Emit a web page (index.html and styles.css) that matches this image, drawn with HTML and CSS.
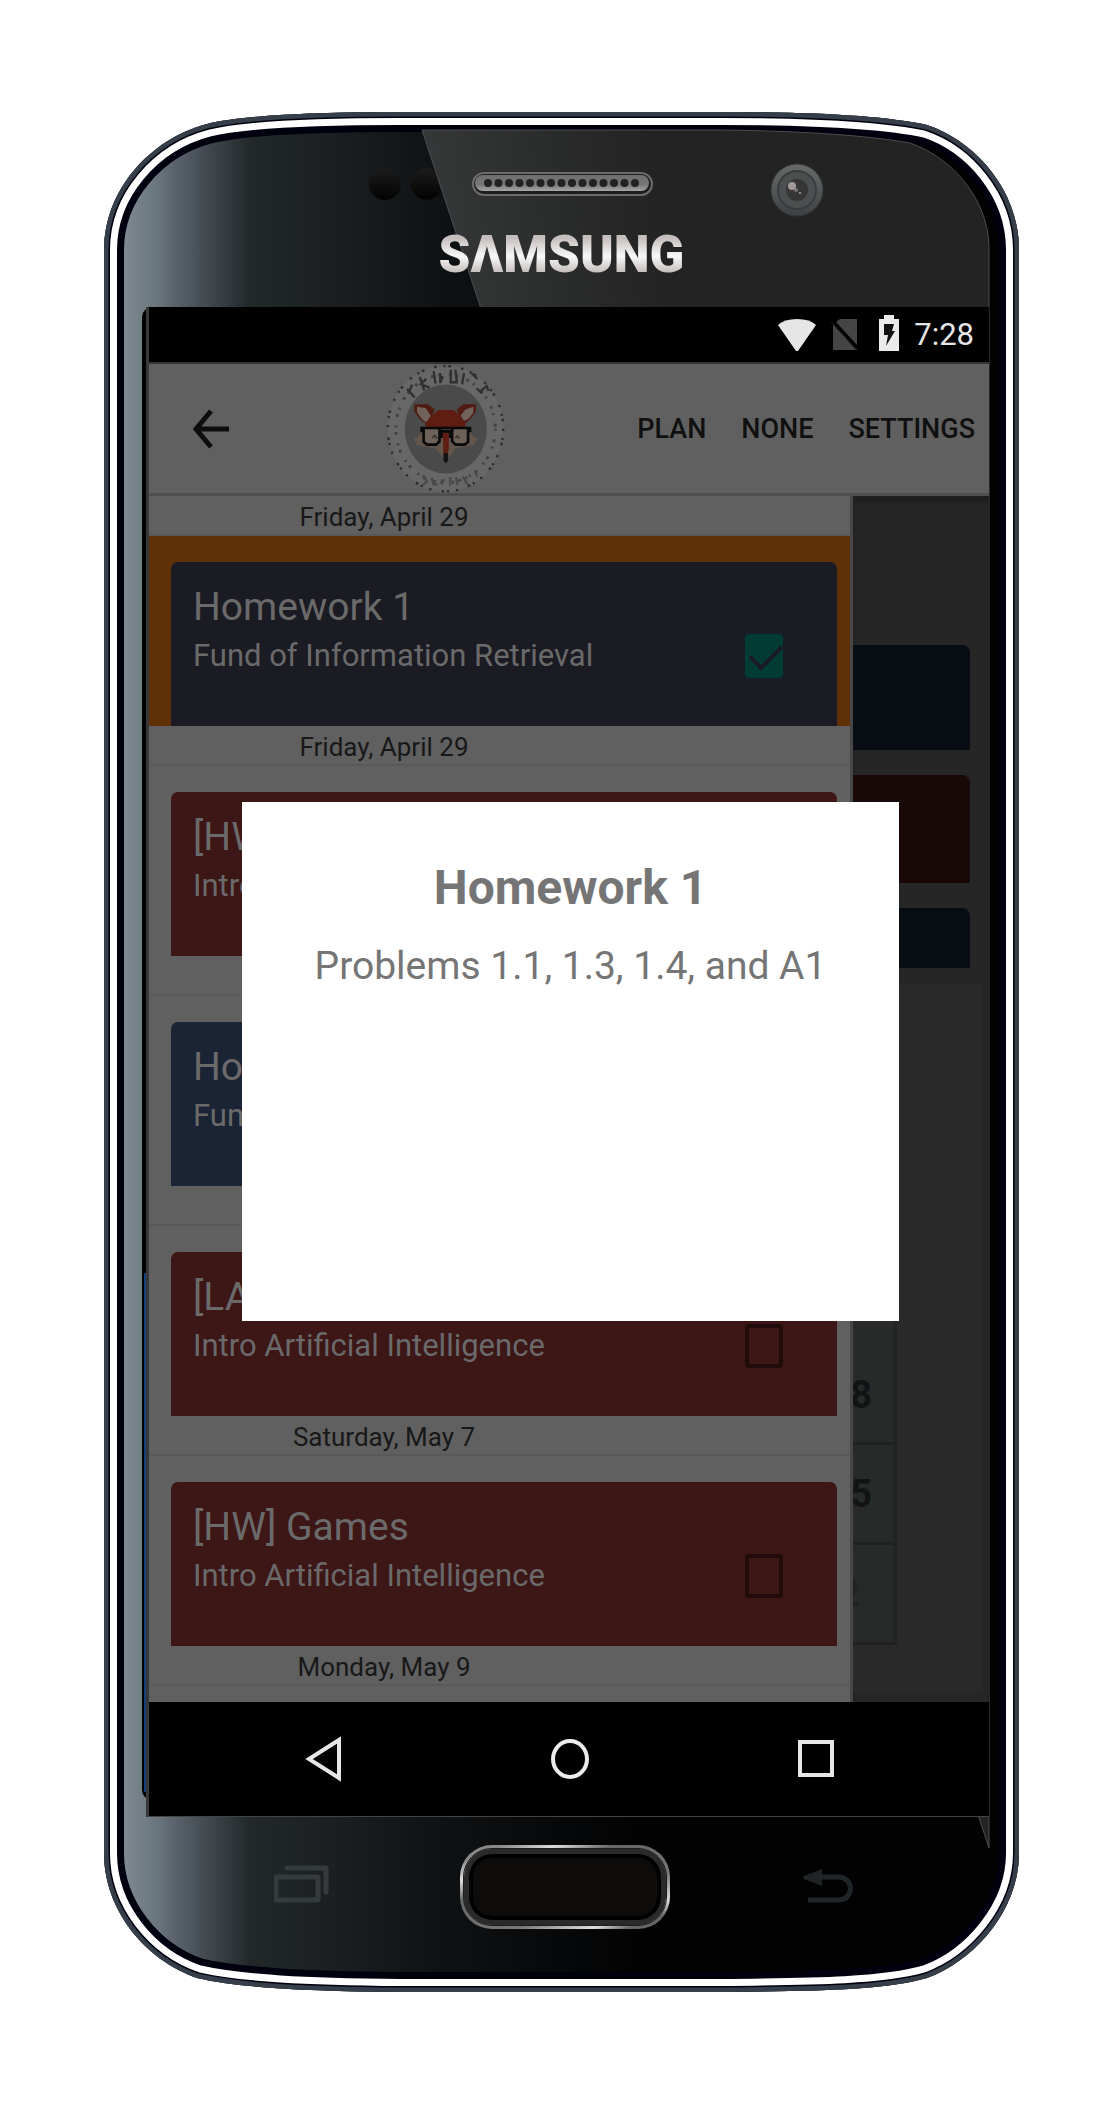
FILE: index.html
```html
<!DOCTYPE html>
<html lang="en">
<head>
<meta charset="utf-8">
<meta name="viewport" content="width=device-width, initial-scale=1">
<title>Homework planner</title>
<link rel="stylesheet" href="styles.css">
</head>
<body>
<div class="phone">
  <svg class="frame" viewBox="104 112 915 1880" preserveAspectRatio="none" aria-hidden="true">
    <defs>
      <linearGradient id="body" gradientUnits="userSpaceOnUse" x1="124" y1="0" x2="650" y2="0">
        <stop offset="0" stop-color="#7e8990"/><stop offset=".06" stop-color="#6b777e"/>
        <stop offset=".1" stop-color="#59616b"/><stop offset=".15" stop-color="#454d53"/>
        <stop offset=".24" stop-color="#22282a"/><stop offset=".38" stop-color="#1c2022"/>
        <stop offset=".57" stop-color="#101416"/><stop offset=".7" stop-color="#0c0d0f"/>
        <stop offset=".88" stop-color="#050607"/><stop offset="1" stop-color="#020202"/>
      </linearGradient>
      <linearGradient id="glare" gradientUnits="userSpaceOnUse" x1="430" y1="200" x2="660" y2="170">
        <stop offset="0" stop-color="#363738"/><stop offset=".6" stop-color="#292a2a"/><stop offset="1" stop-color="#232323"/>
      </linearGradient>
      <path id="shell" d="M104 250C104 190 150 139 207 124C240 116 307 112 400 112H720C820 112 885 116 927 125C975 141 1019 190 1019 250V1853C1019 1910 975 1960 927 1978C885 1990 820 1991 720 1992H400C307 1991 240 1988 197 1978C145 1960 104 1910 104 1853Z"/>
      <clipPath id="shellClip"><use href="#shell"/></clipPath>
    </defs>
    <g clip-path="url(#shellClip)">
      <use href="#shell" fill="url(#body)"/>
      <use href="#shell" fill="none" stroke="#00000f" stroke-width="40"/>
      <path d="M422 130H720C810 131 870 136 910 143C958 160 989 205 989 248V1848Z" fill="url(#glare)" stroke="#4c4d50"/>
      <use href="#shell" fill="none" stroke="#fff" stroke-width="26"/>
      <use href="#shell" fill="none" stroke="#00000f" stroke-width="12"/>
      <use href="#shell" fill="none" stroke="#363e4a" stroke-width="9"/>
      <rect x="142" y="307" width="40" height="1493" rx="10" fill="#000"/>
      <path d="M145 1273V1792" stroke="#12407c" stroke-width="2"/>
    </g>
  </svg>

  <header class="bezel-top">
    <svg class="sensors" viewBox="104 112 915 110" aria-hidden="true">
      <defs>
        <linearGradient id="dark" x1="0" y1="0" x2="0" y2="1"><stop stop-color="#1c1c1c"/><stop offset="1" stop-color="#030201"/></linearGradient>
        <linearGradient id="grille" x1="0" y1="0" x2="0" y2="1"><stop stop-color="#6f6e70"/><stop offset=".6" stop-color="#777"/><stop offset="1" stop-color="#a5a5a5"/></linearGradient>
        <linearGradient id="cam" x1="0" y1="0" x2="0" y2="1"><stop stop-color="#686a6a"/><stop offset="1" stop-color="#3e4143"/></linearGradient>
      </defs>
      <circle cx="385" cy="184" r="16" fill="url(#dark)"/>
      <path d="M433 169A16 16 0 1 0 441 191Z" fill="url(#dark)"/>
      <rect x="473" y="173" width="179" height="22" rx="11" fill="#1d1d1f" stroke="#6c6c6c" stroke-width="2"/>
      <rect x="475" y="175" width="174" height="16" rx="8" fill="url(#grille)"/>
      <path d="M488 183H636" stroke="#222" stroke-width="8" stroke-linecap="round" stroke-dasharray="0 10.5"/>
      <circle cx="797" cy="190" r="26" fill="url(#cam)" stroke="#333638"/>
      <circle cx="797" cy="190" r="19" fill="#4c4f50" stroke="#3a3c3d" stroke-width="2"/>
      <circle cx="797" cy="190" r="11" fill="#363636"/>
      <circle cx="792" cy="186" r="4" fill="#a39a98"/><circle cx="796" cy="190" r="2" fill="#777"/><circle cx="800" cy="193" r="1" fill="#aaa"/>
    </svg>
    <div class="brand" role="img" aria-label="SAMSUNG">SΛMSUNG</div>
  </header>

  <main class="screen">
    <div class="status">
      <svg width="38" height="34" viewBox="0 0 38 34" aria-hidden="true"><path d="M0 7Q6 1 19 1T38 7L20 33H18Z" fill="#e6e6e6"/></svg>
      <svg class="sim" width="28" height="34" viewBox="0 0 28 34" aria-hidden="true"><path d="M9 1H26V27L5 4ZM2 6L25 32H2Z" fill="#454545"/><path d="M0 4L27 33" stroke="#222" stroke-width="1"/></svg>
      <svg class="battery" width="20" height="36" viewBox="0 0 20 36" aria-hidden="true"><path d="M5 0H15V4H20V36H0V4H5Z" fill="#ebebeb"/><path d="M5 9H15L13 16H16L7 31L9 20H5Z" fill="#111"/></svg>
      <time>7:28</time>
    </div>

    <nav class="appbar">
      <button class="icon-btn" type="button" aria-label="Back">
        <svg width="36" height="40" viewBox="0 0 36 40" aria-hidden="true"><path d="M18 2L3 20L18 38M3 20H36" fill="none" stroke="#0d0d0d" stroke-width="5"/></svg>
      </button>
      <svg class="fox" width="122" height="130" viewBox="75 23 365 392" aria-hidden="true">
        <ellipse cx="256" cy="218" rx="174" ry="190" fill="#676767"/>
        <ellipse cx="256" cy="218" rx="174" ry="189" fill="none" stroke="#2b2b2b" stroke-width="7" stroke-dasharray="7 21 6 9 8 31"/>
        <ellipse cx="256" cy="218" rx="150" ry="163" fill="none" stroke="#444" stroke-width="9" stroke-dasharray="6 26 9 14"/>
        <g stroke="#303030" stroke-width="7" fill="none">
          <path d="M140 98L163 124M155 85L148 104M178 62L192 103M198 68L182 84L208 94M220 45L226 82M240 50V80L248 60M272 40V78H290L286 40M312 50L306 84M334 50L352 68M350 96L366 112M358 108L380 90L386 104"/>
          <path d="M188 358L200 378L188 388M214 366L220 386H232M242 374H254M270 364V390M288 364L292 388M308 362L324 388M322 362L314 372M345 348L352 362" stroke="#4a4a4a"/>
        </g>
        <ellipse cx="257" cy="219" rx="124" ry="134" fill="#4a4a4a"/>
        <path d="M162 144H202L224 160L202 206L180 190L162 166ZM348 144H310L290 160L308 206L330 190L348 166Z" fill="#4f1b12"/>
        <path d="M170 152L196 156L212 180L200 202L184 188L170 168ZM340 152L316 160L302 178L310 196L326 188L340 170Z" fill="#6f635b"/>
        <path d="M160 250L185 232H330L354 250L340 268L288 276L258 316L226 278L170 268Z" fill="#62564c"/>
        <path d="M196 214V200L212 180L235 162H280L302 180L316 200V214Z" fill="#5e1d10"/>
        <path d="M248 225H266V280L260 300H250Z" fill="#5e1d10"/>
        <path d="M250 292H264V314L257 322L250 314Z" fill="#141414"/>
        <rect x="190" y="218" width="46" height="46" rx="10" fill="#6c6259"/><rect x="278" y="218" width="46" height="46" rx="10" fill="#6c6259"/>
        <path d="M180 216H334M184 216V228M330 216V228M190 220V258L200 266H228L238 256V220M276 220V256L286 266H314L324 258V220M244 222V246M270 222V246M238 226H276" fill="none" stroke="#090909" stroke-width="8"/>
        <path d="M216 246L224 238L230 248M286 246L292 240L298 248" fill="none" stroke="#333" stroke-width="5"/>
      </svg>
      <div class="actions">
        <button type="button">PLAN</button>
        <button type="button">NONE</button>
        <button type="button">SETTINGS</button>
      </div>
    </nav>

    <div class="content">
      <section class="drawer">
        <p class="date">Friday, April 29</p>
        <label class="slot selected">
          <span class="card slate">
            <span class="words"><span class="title">Homework 1</span><span class="course">Fund of Information Retrieval</span></span>
            <input type="checkbox" checked>
          </span>
        </label>
        <p class="date">Friday, April 29</p>
        <label class="slot">
          <span class="card red">
            <span class="words"><span class="title">[HW]</span><span class="course">Intro Artificial Intelligence</span></span>
            <input type="checkbox">
          </span>
        </label>
        <p class="date"></p>
        <label class="slot">
          <span class="card blue">
            <span class="words"><span class="title">Homework</span><span class="course">Fund of Information Retrieval</span></span>
            <input type="checkbox">
          </span>
        </label>
        <p class="date"></p>
        <label class="slot">
          <span class="card red">
            <span class="words"><span class="title">[LAB]</span><span class="course">Intro Artificial Intelligence</span></span>
            <input type="checkbox">
          </span>
        </label>
        <p class="date">Saturday, May 7</p>
        <label class="slot">
          <span class="card red">
            <span class="words"><span class="title">[HW] Games</span><span class="course">Intro Artificial Intelligence</span></span>
            <input type="checkbox">
          </span>
        </label>
        <p class="date">Monday, May 9</p>
      </section>
      <section class="behind">
        <div class="strip navy"></div>
        <div class="strip maroon"></div>
        <div class="strip navy short"></div>
        <div class="calendar">
          <div class="day tall"><span>8</span></div>
          <div class="day"><span>5</span></div>
          <div class="day faint"><span>2</span></div>
        </div>
      </section>
    </div>

    <nav class="navbar">
      <button type="button" aria-label="Back"><svg width="38" height="46" viewBox="0 0 38 46" aria-hidden="true"><path d="M34 4V42L4 23Z" fill="none" stroke="#e6e6e6" stroke-width="4"/></svg></button>
      <button type="button" aria-label="Home"><svg width="40" height="42" viewBox="0 0 40 42" aria-hidden="true"><ellipse cx="20" cy="21" rx="17" ry="18" fill="none" stroke="#ececec" stroke-width="4"/></svg></button>
      <button type="button" aria-label="Overview"><svg width="36" height="38" viewBox="0 0 36 38" aria-hidden="true"><rect x="2" y="2" width="32" height="33" fill="none" stroke="#e6e6e6" stroke-width="4"/></svg></button>
    </nav>

    <div class="overlay">
      <div class="dialog" role="dialog" aria-labelledby="dlg">
        <h1 id="dlg">Homework 1</h1>
        <p>Problems 1.1, 1.3, 1.4, and A1</p>
      </div>
    </div>
  </main>

  <footer class="bezel-bottom">
    <button type="button" aria-label="Recent apps"><svg width="55" height="44" viewBox="0 0 55 44" aria-hidden="true"><rect x="2" y="12" width="42" height="23" rx="1" fill="none" stroke="#343a3d" stroke-width="5"/><path d="M13 3H52V27" fill="none" stroke="#343a3d" stroke-width="5" stroke-linecap="round" stroke-linejoin="round"/></svg></button>
    <button class="home" type="button" aria-label="Home key"><span></span></button>
    <button type="button" aria-label="Back key"><svg width="50" height="36" viewBox="0 0 50 36" aria-hidden="true"><path d="M15 8H36A11 11 0 0 1 36 31H5" fill="none" stroke="#1f2526" stroke-width="5"/><path d="M19 0V17L1 10Q-1 8 1 7Z" fill="#1f2526"/></svg></button>
  </footer>
</div>
</body>
</html>
```
FILE: styles.css
```css
* { box-sizing: border-box; }

body {
  margin: 0;
  padding: 112px 98px 112px 104px;
  background: #fff;
  font-family: Roboto, "Liberation Sans", sans-serif;
}

h1, p { margin: 0; }

button {
  display: flex;
  align-items: center;
  justify-content: center;
  margin: 0;
  padding: 0;
  border: 0;
  background: none;
  color: inherit;
  font: inherit;
  cursor: pointer;
}

/* handset */
.phone {
  position: relative;
  isolation: isolate;
}

.frame {
  position: absolute;
  inset: 0;
  z-index: -1;
  width: 100%;
  height: 100%;
}

.bezel-top { height: 195px; }

.sensors {
  display: block;
  width: 100%;
  height: 110px;
}

.brand {
  width: fit-content;
  margin: 0 auto;
  background: linear-gradient(#c4bebc 24%, #f8f8f8 52%, #bdb6b4 80%);
  background-clip: text;
  color: transparent;
  font-size: 51px;
  font-weight: 900;
  line-height: 66px;
}

.screen {
  position: relative;
  margin: 0 30px 0 42px;
  border-left: 3px solid #383838;
  border-bottom: 1px solid #444;
  background: #000;
}

/* system status bar */
.status {
  display: flex;
  align-items: center;
  justify-content: flex-end;
  height: 55px;
  padding-right: 15px;
  color: #e6e6e6;
  font-size: 31px;
  line-height: 36px;
}

.sim { margin-left: 15px; }

.battery { margin: 0 15px 4px 20px; }

/* app bar */
.appbar {
  display: flex;
  align-items: center;
  height: 134px;
  padding: 0 14px 0 44px;
  border-top: 2px solid #333;
  border-bottom: 3px solid #4f4f4f;
  background: #606060;
  color: #101010;
}

.fox { margin-left: 156px; }

.actions {
  display: flex;
  gap: 35px;
  margin-left: auto;
  font-size: 27px;
  font-weight: 500;
  line-height: 32px;
}

/* assignment list */
.content {
  display: grid;
  grid-template-columns: 704fr 136fr;
  height: 1206px;
  overflow: hidden;
}

.drawer {
  border-right: 3px solid #474747;
  background: #606060;
}

.date {
  height: 40px;
  padding-right: 231px;
  border-bottom: 2px solid #595959;
  color: #181818;
  font-size: 26px;
  line-height: 42px;
  text-align: center;
}

.slot {
  display: block;
  height: 190px;
  padding: 26px 13px 0 22px;
}

.selected { background: #603006; }

.card {
  display: flex;
  justify-content: space-between;
  height: 100%;
  padding: 20px 54px 0 22px;
  border-radius: 7px 7px 0 0;
  color: #6a6a6a;
}

.slate { background: #1b1b24; }
.red { background: #3d1616; }
.blue { background: #1b2434; }

.title, .course {
  display: block;
  white-space: nowrap;
}

.title {
  font-size: 39px;
  line-height: 50px;
}

.course {
  font-size: 31px;
  line-height: 48px;
}

input[type="checkbox"] {
  appearance: none;
  width: 38px;
  height: 44px;
  margin: 52px 0 0;
  border: 4px solid #210b0b;
  border-radius: 4px;
}

input[type="checkbox"]:checked {
  border-color: #003c34;
  background: #003c34;
}

input[type="checkbox"]:checked::before {
  content: "";
  display: block;
  width: 28px;
  height: 14px;
  margin: 6px 1px;
  border-bottom: 4px solid #1b1b24;
  border-left: 4px solid #1b1b24;
  rotate: -45deg;
}

/* planner page beneath the drawer */
.behind {
  padding: 149px 7px 11px 0;
  overflow: hidden;
  background: #262626;
  box-shadow: inset 0 6px 3px #1f1f1f;
}

.strip {
  height: 105px;
  margin: 0 12px 25px 0;
  border-radius: 0 8px 0 0;
}

.navy { background: #080d14; }

.maroon {
  height: 108px;
  background: #180808;
}

.short {
  height: 60px;
  margin-bottom: 16px;
}

.calendar {
  height: 709px;
  padding-top: 199px;
  background: #292929;
}

.day {
  display: flex;
  align-items: center;
  justify-content: flex-end;
  width: 44px;
  height: 100px;
  padding-right: 22px;
  border-right: 3px solid #212323;
  border-bottom: 3px solid #202121;
  background: #272a29;
  color: #121314;
  font-size: 38px;
  font-weight: 700;
}

.tall {
  height: 262px;
  padding-top: 164px;
}

.faint {
  padding-right: 34px;
  color: #202323;
}

/* system navigation */
.navbar {
  display: grid;
  grid-template-columns: repeat(3, 1fr);
  height: 114px;
  padding: 0 50px 0 52px;
}

/* assignment details */
.overlay {
  position: absolute;
  inset: 0;
  display: grid;
  place-items: center;
  padding: 0 90px 0 93px;
}

.dialog {
  width: 100%;
  min-height: 519px;
  padding: 52px 16px;
  background: #fff;
  color: #757575;
  text-align: center;
}

.dialog h1 {
  font-size: 48px;
  font-weight: 700;
  line-height: 68px;
}

.dialog p {
  font-size: 39px;
  line-height: 88px;
}

/* hardware keys */
.bezel-bottom {
  display: grid;
  grid-template-columns: repeat(3, 1fr);
  align-items: center;
  justify-items: center;
  height: 175px;
  padding: 0 59px 36px 66px;
}

.home {
  width: 210px;
  height: 84px;
  padding: 4px;
  border-radius: 32px;
  background: linear-gradient(160deg, #888 10%, #ddd 22%, #666 35%, #777 65%, #ddd 82%, #666 90%);
}

.home span {
  width: 100%;
  height: 100%;
  border: 5px solid #2b2a29;
  border-radius: 28px;
  outline: 1px solid #1a1c1e;
  background: #0e0c0a;
  box-shadow: inset 0 0 0 4px #000;
}
```
